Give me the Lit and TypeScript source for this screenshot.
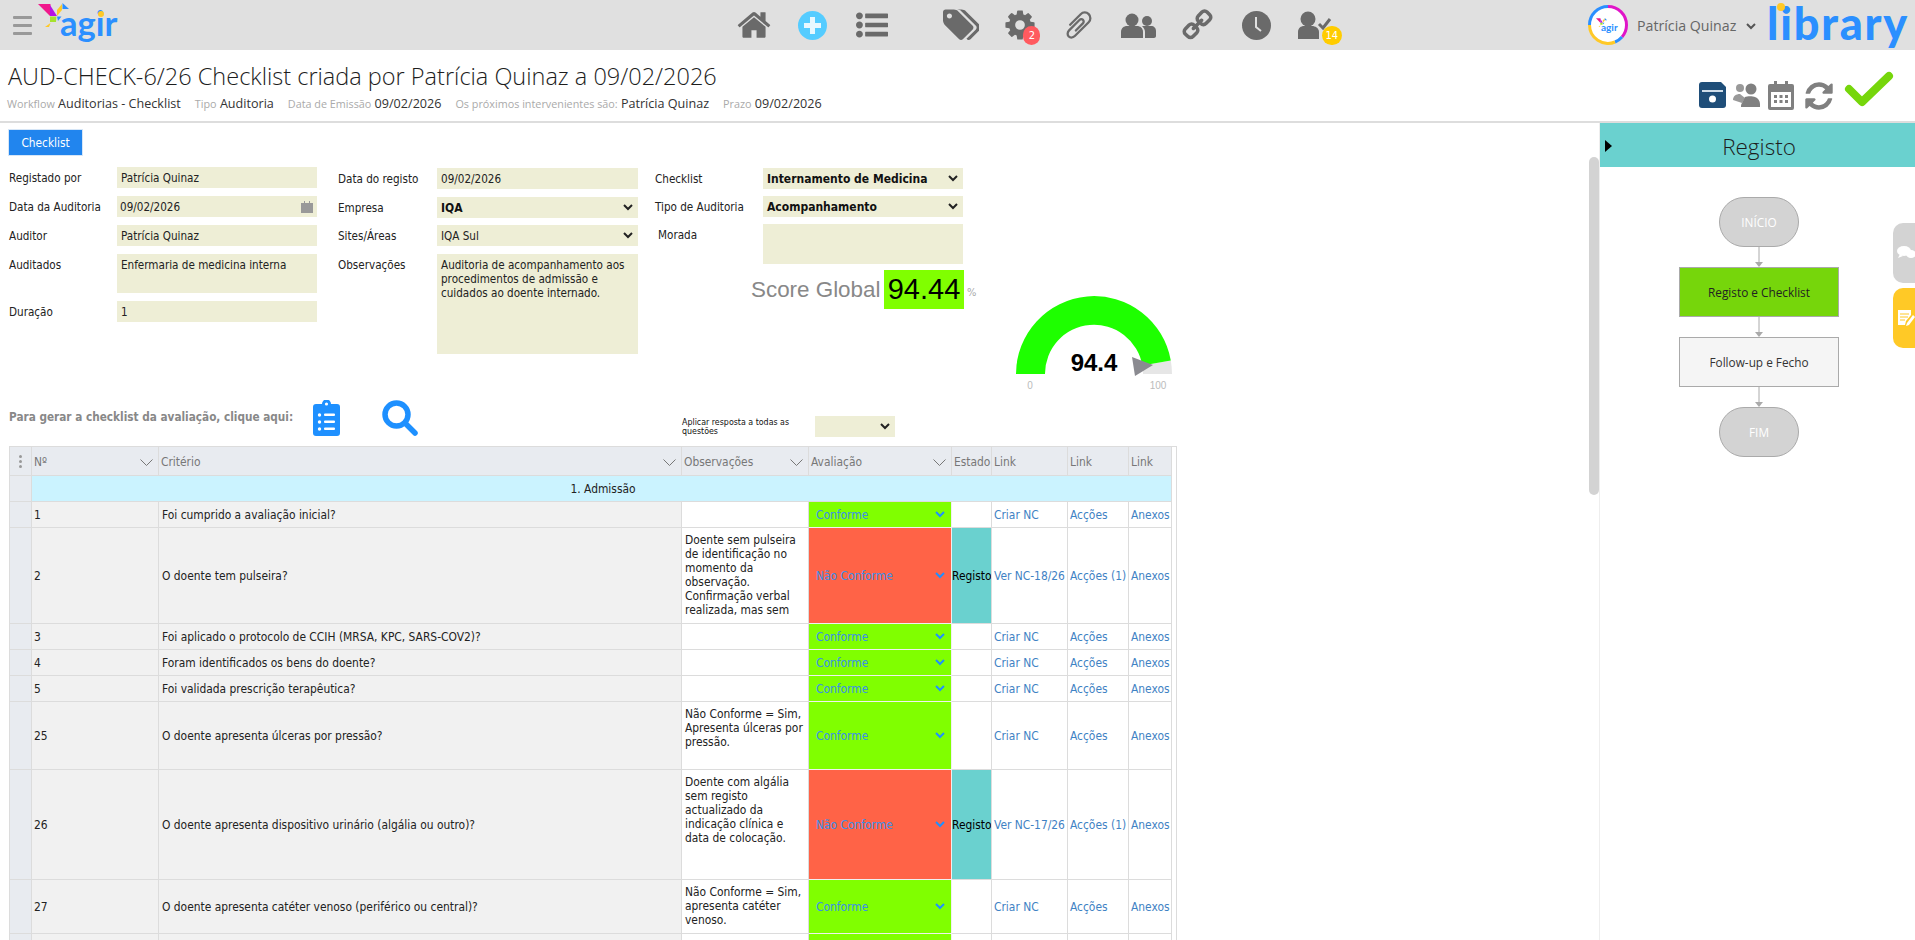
import { LitElement, html, css, svg } from "lit";
import { customElement } from "lit/decorators.js";

const fa = (d: string, w: number, h: number, cls = "") =>
  html`<svg class=${cls} width=${w} height=${h} viewBox="0 0 1792 1792"><path fill="currentColor" d=${d}></path></svg>`;

const P = {
  home: "M1472 992v480q0 26-19 45t-45 19h-384v-384h-256v384h-384q-26 0-45-19t-19-45v-480q0-1 .5-3t.5-3l575-474 575 474q1 2 1 6zm223-69l-62 74q-8 9-21 11h-3q-13 0-21-7l-692-577-692 577q-12 8-24 7-13-2-21-11l-62-74q-8-10-7-23.5t11-21.5l719-599q32-26 76-26t76 26l244 204v-195q0-14 9-23t23-9h192q14 0 23 9t9 23v408l219 182q10 8 11 21.5t-7 23.5z",
  list: "M384 1408q0 80-56 136t-136 56-136-56-56-136 56-136 136-56 136 56 56 136zm0-512q0 80-56 136t-136 56-136-56-56-136 56-136 136-56 136 56 56 136zm1408 416v192q0 13-9.5 22.5t-22.5 9.5h-1216q-13 0-22.5-9.5t-9.5-22.5v-192q0-13 9.5-22.5t22.5-9.5h1216q13 0 22.5 9.5t9.5 22.5zm-1408-928q0 80-56 136t-136 56-136-56-56-136 56-136 136-56 136 56 56 136zm1408 416v192q0 13-9.5 22.5t-22.5 9.5h-1216q-13 0-22.5-9.5t-9.5-22.5v-192q0-13 9.5-22.5t22.5-9.5h1216q13 0 22.5 9.5t9.5 22.5zm0-512v192q0 13-9.5 22.5t-22.5 9.5h-1216q-13 0-22.5-9.5t-9.5-22.5v-192q0-13 9.5-22.5t22.5-9.5h1216q13 0 22.5 9.5t9.5 22.5z",
  tags: "M448 448q0-53-37.5-90.5t-90.5-37.5-90.5 37.5-37.5 90.5 37.5 90.5 90.5 37.5 90.5-37.5 37.5-90.5zm1067 576q0 53-37 90l-491 492q-39 37-91 37-53 0-90-37l-715-716q-38-37-64.5-101t-26.5-117v-416q0-52 38-90t90-38h416q53 0 117 26.5t102 64.5l715 714q37 39 37 91zm384 0q0 53-37 90l-491 492q-39 37-91 37-36 0-59-14t-53-45l470-470q37-37 37-90 0-52-37-91l-715-714q-38-38-102-64.5t-117-26.5h224q53 0 117 26.5t102 64.5l715 714q37 39 37 91z",
  cog: "M1152 896q0-106-75-181t-181-75-181 75-75 181 75 181 181 75 181-75 75-181zm512-109v222q0 12-8 23t-20 13l-185 28q-19 54-39 91 35 50 107 138 10 12 10 25t-9 23q-27 37-99 108t-94 71q-12 0-26-9l-138-108q-44 23-91 38-16 136-29 186-7 28-36 28h-222q-14 0-24.5-8.5t-11.5-21.5l-28-184q-49-16-90-37l-141 107q-10 9-25 9-14 0-25-11-126-114-165-168-7-10-7-23 0-12 8-23 15-21 51-66.5t54-70.5q-27-50-41-99l-183-27q-13-2-21-12.5t-8-23.5v-222q0-12 8-23t19-13l186-28q14-46 39-92-40-57-107-138-10-12-10-24 0-10 9-23 26-36 98.5-107.5t94.5-71.5q13 0 26 10l138 107q44-23 91-38 16-136 29-186 7-28 36-28h222q14 0 24.5 8.5t11.5 21.5l28 184q49 16 90 37l142-107q9-9 24-9 13 0 25 10 129 119 165 170 7 8 7 22 0 12-8 23-15 21-51 66.5t-54 70.5q26 50 41 98l183 28q13 2 21 12.5t8 23.5z",
  clip: "M1596 1385q0 117-79 196t-196 79q-135 0-235-100l-777-776q-113-115-113-271 0-159 110-270t269-111q158 0 273 113l605 606q10 10 10 22 0 16-30.5 46.5t-46.5 30.5q-13 0-23-10l-606-607q-79-77-181-77-106 0-179 75t-73 181q0 105 76 181l776 777q63 63 145 63 64 0 106-42t42-106q0-82-63-145l-581-581q-26-24-60-24-29 0-48 19t-19 48q0 32 25 59l410 410q10 10 10 22 0 16-31 47t-47 31q-12 0-22-10l-410-410q-63-61-63-149 0-82 57-139t139-57q88 0 149 63l581 581q100 98 100 235z",
  link: "M1520 1216q0-40-28-68l-208-208q-28-28-68-28-42 0-72 32 3 3 19 18.5t21.5 21.5 15 19 13 25.5 3.5 27.5q0 40-28 68t-68 28q-15 0-27.5-3.5t-25.5-13-19-15-21.5-21.5-18.5-19q-33 31-33 73 0 40 28 68l206 207q27 27 68 27 40 0 68-26l147-146q28-28 28-67zm-703-705q0-40-28-68l-206-207q-28-28-68-28-39 0-68 27l-147 146q-28 28-28 67 0 40 28 68l208 208q27 27 68 27 42 0 72-31-3-3-19-18.5t-21.5-21.5-15-19-13-25.5-3.5-27.5q0-40 28-68t68-28q15 0 27.5 3.5t25.5 13 19 15 21.5 21.5 18.5 19q33-31 33-73zm895 705q0 120-85 203l-147 146q-83 83-203 83-121 0-204-85l-206-207q-83-83-83-203 0-123 88-209l-88-88q-86 88-208 88-120 0-204-84l-208-208q-84-84-84-204t85-203l147-146q83-83 203-83 121 0 204 85l206 207q83 83 83 203 0 123-88 209l88 88q86-88 208-88 120 0 204 84l208 208q84 84 84 204z",
  refresh: "M1639 1056q0 5-1 7-64 268-268 434.5t-478 166.5q-146 0-282.5-55t-243.5-157l-129 129q-19 19-45 19t-45-19-19-45v-448q0-26 19-45t45-19h448q26 0 45 19t19 45-19 45l-137 137q71 66 161 102t187 36q134 0 250-65t186-179q11-17 53-117 8-23 30-23h192q13 0 22.5 9.5t9.5 22.5zm25-800v448q0 26-19 45t-45 19h-448q-26 0-45-19t-19-45 19-45l138-138q-148-137-349-137-134 0-250 65t-186 179q-11 17-53 117-8 23-30 23h-199q-13 0-22.5-9.5t-9.5-22.5v-7q65-268 270-434.5t480-166.5q146 0 284 55.5t245 156.5l130-129q19-19 45-19t45 19 19 45z",
};

const chev = (cls = "chev") => html`<svg class=${cls} width="10" height="7" viewBox="0 0 10 7"><polyline points="1,1 5,5 9,1" fill="none" stroke="currentColor" stroke-width="2"></polyline></svg>`;
const thinChev = html`<svg class="hchev" width="13" height="7" viewBox="0 0 13 7"><polyline points="0.5,0.5 6.5,6.5 12.5,0.5" fill="none" stroke="currentColor" stroke-width="1"></polyline></svg>`;

const bird = svg`
  <polygon points="0,1 12.5,1 12,13" fill="#f0188c"></polygon>
  <polygon points="12,2 19,13 12,13" fill="#b512e6"></polygon>
  <polygon points="19,7 24,1 24,7 19,13" fill="#ffc926"></polygon>
  <polygon points="24.5,0 31,6 24.5,6" fill="#2b8fff"></polygon>
  <polygon points="12,13.5 18.5,13.5 18,19 12,19" fill="#a6e22e"></polygon>
  <polygon points="19,13.5 23.5,13.5 20,18" fill="#2b8fff"></polygon>
  <polygon points="7,24 12.5,20 11,24" fill="#ffc926"></polygon>`;

type Row = { n: string; q: string; h: number; obs?: string[]; bad?: boolean; nc?: string };
const rows: Row[] = [
  { n: "1", q: "Foi cumprido a avaliação inicial?", h: 26 },
  { n: "2", q: "O doente tem pulseira?", h: 96, bad: true, nc: "Ver NC-18/26",
    obs: ["Doente sem pulseira", "de identificação no", "momento da", "observação.", "Confirmação verbal", "realizada, mas sem"] },
  { n: "3", q: "Foi aplicado o protocolo de CCIH (MRSA, KPC, SARS-COV2)?", h: 26 },
  { n: "4", q: "Foram identificados os bens do doente?", h: 26 },
  { n: "5", q: "Foi validada prescrição terapêutica?", h: 26 },
  { n: "25", q: "O doente apresenta úlceras por pressão?", h: 68,
    obs: ["Não Conforme = Sim,", "Apresenta úlceras por", "pressão."] },
  { n: "26", q: "O doente apresenta dispositivo urinário (algália ou outro)?", h: 110, bad: true, nc: "Ver NC-17/26",
    obs: ["Doente com algália", "sem registo", "actualizado da", "indicação clínica e", "data de colocação."] },
  { n: "27", q: "O doente apresenta catéter venoso (periférico ou central)?", h: 54,
    obs: ["Não Conforme = Sim,", "apresenta catéter", "venoso."] },
];

@customElement("app-root")
export class AppRoot extends LitElement {
  static styles = css`
    :host { display: block; width: 1915px; height: 940px; overflow: hidden; background: #fff; position: relative;
      font-family: "DejaVu Sans", "Liberation Sans", sans-serif; font-stretch: condensed; font-size: 11.8px; color: #222; }
    * { box-sizing: border-box; }
    svg { display: block; flex: none; }
    .flip { transform: scaleX(-1); }

    .top { height: 50px; background: #e0e0e0; display: flex; align-items: flex-start; }
    .burger { width: 19px; flex: none; margin: 16px 0 0 13px; display: flex; flex-direction: column; gap: 5px; }
    .burger i { height: 3px; background: #999; border-radius: 1px; }
    .logo { position: relative; flex: none; width: 82px; height: 47px; margin: 3px 0 0 6px; }
    .logo svg { position: absolute; left: 0; top: 0; }
    .agir { position: absolute; left: 22px; top: 0; font: 700 34.5px/40px Lato, "Open Sans", sans-serif; color: #2b8fff; }
    .logo .dot { position: absolute; left: 60px; top: 8px; width: 6px; height: 6px; border-radius: 50%; background: #ffc926; }
    .nav { display: flex; flex: none; margin-left: 604px; height: 50px; color: #6a6a6a; }
    .nav .ic { position: relative; width: 59.1px; display: flex; align-items: center; justify-content: center; }
    .nav .ic.gap { margin-left: 30px; }
    .badge { position: absolute; top: 26px; height: 19px; border-radius: 10px; color: #fff; font-size: 11px; line-height: 19px; text-align: center; }
    .badge.red { left: 33px; width: 17px; background: #ff5a5f; }
    .badge.yel { left: 36px; width: 20px; background: #ffcc00; }
    .user { margin-left: auto; display: flex; align-items: center; height: 50px; flex: none; }
    .uname { margin-left: 9px; font: 400 14.2px "Open Sans", sans-serif; color: #666; width: 99px; white-space: nowrap; }
    .user .drop { margin: 2px 0 0 10px; color: #555; }
    .lib { position: relative; margin-left: 11px; width: 148px; height: 50px; font: 900 45px/46px Lato, "Open Sans", sans-serif; color: #2b8fff; letter-spacing: 1.8px; }
    .lib .dot { position: absolute; left: 10px; top: 3px; width: 8px; height: 8px; border-radius: 50%; background: #ffc926; }

    .titlebar { height: 73px; border-bottom: 2px solid #ddd; display: flex; justify-content: space-between; }
    .tt { padding: 9px 0 0 8px; }
    h1 { margin: 0; font: 300 23.5px/34px "Open Sans", sans-serif; color: #1d1d1d; white-space: nowrap; }
    .sub { display: flex; margin: 3px 0 0 -1px; font: 400 12.6px/16px "Open Sans", sans-serif; white-space: nowrap; color: #333; }
    .sub span { margin-right: 14px; }
    .sub b { font-weight: 400; font-size: 10.8px; color: #aaa; }
    .tools { display: flex; align-items: flex-start; padding: 21px 21px 0 0; color: #808080; }
    .tools svg { margin-top: 11px; }
    .tools .save { color: #1f4e79; margin-right: 7px; }
    .tools .grp { margin-right: 8px; margin-top: 12px; }
    .tools .cal { margin-right: 9px; margin-top: 10px; }
    .tools .ref { margin-right: 9px; }
    .tools .ref svg { margin-top: 9px; }
    .tools .ok { margin-top: 0; color: #76d60b; }

    .main { display: flex; height: 817px; }
    .content { width: 1589px; flex: none; overflow: hidden; }
    .scroll { width: 11px; flex: none; padding-top: 34px; border-right: 1px solid #eee; }
    .scroll i { display: block; height: 338px; width: 10px; background: #d3d3d3; border-radius: 5px; }

    .btn { display: block; margin: 6px 0 0 8px; width: 75px; height: 27px; background: #2185ee; color: #fff; text-align: center; line-height: 27px; border: 1px solid #d6e6f7; }
    .form { display: flex; margin: 11px 0 0 9px; font-size: 11.6px; }
    .c { display: grid; grid-auto-rows: min-content; align-items: center; }
    .c1 { grid-template-columns: 108px 200px; row-gap: 8px; width: 308px; }
    .c2 { grid-template-columns: 99px 201px; row-gap: 8px; margin-left: 21px; padding-top: 1px; width: 300px; }
    .c3 { margin-left: 17px; padding-top: 1px; width: 330px; }
    .c3 .g { display: grid; grid-template-columns: 108px 200px; row-gap: 7px; align-items: center; }
    .f { height: 21px; background: #eeeed6; padding: 0 4px; line-height: 22px; display: flex; align-items: center; justify-content: space-between; white-space: nowrap; color: #222; }
    .f.sel { padding-right: 5px; }
    .f.b { font-weight: 700; font-size: 12px; color: #111; }
    .f .chev { color: #222; }
    .f.ta { display: block; line-height: 14px; padding-top: 4px; white-space: normal; }
    .f.date { padding-left: 3px; }
    .up { margin-top: -1px; }
    .lbl-top { align-self: start; padding-top: 4px; }
    .score { display: flex; align-items: center; margin: 6px 0 0 96px; height: 39px; }
    .score .sl { font: 400 22.4px "Liberation Sans", sans-serif; color: #888; width: 133px; white-space: nowrap; }
    .score .sv { width: 80px; height: 39px; background: #80ff00; font: 400 29px/39px "Liberation Sans", sans-serif; color: #000; text-align: center; }
    .score .pc { margin-left: 3px; margin-top: 6px; color: #aaa; font-size: 11px; }
    .gauge { margin: 129px 0 0 31px; }
    .gauge text { font-family: "Liberation Sans", sans-serif; }

    .gen { display: flex; height: 37px; margin-top: 4px; padding-left: 9px; }
    .gen .t { width: 304px; align-self: center; font-weight: 700; font-size: 11.7px; color: #888; white-space: nowrap; margin-top: -3px; }
    .gen .i1 { color: #1e90ff; }
    .gen .i2 { margin-left: 42px; color: #1e90ff; }
    .gen .ap { margin-left: 264px; width: 133px; align-self: flex-end; font-size: 8.8px; line-height: 9px; color: #111; padding-bottom: 1px; }
    .gen .f { width: 80px; align-self: flex-end; justify-content: flex-end; }

    .grid { margin: 9px 0 0 9px; width: 1168px; border: 1px solid #dcdcdc; border-bottom: 0; padding-right: 5px; font-size: 11.9px; }
    table { border-collapse: separate; border-spacing: 0; table-layout: fixed; width: 1162px; }
    .w0 { width: 22px; } .w1 { width: 127px; } .w2 { width: 523px; } .w3 { width: 127px; } .w4 { width: 143px; }
    .w5 { width: 40px; } .w6 { width: 76px; } .w7 { width: 61px; } .w8 { width: 43px; }
    td, th { border-right: 1px solid #dcdcdc; border-bottom: 1px solid #dcdcdc; padding: 0 0 0 3px; font-weight: 400; text-align: left; white-space: nowrap; overflow: hidden; }
    th { background: #e8ebf0; color: #777; height: 29px; padding: 2px 0 0 2px; }
    th .hd { display: flex; align-items: center; justify-content: space-between; padding-right: 5px; }
    th .hchev { color: #777; }
    .grip { background: #e8ebf0; padding: 0; }
    .dots { display: flex; flex-direction: column; gap: 2px; align-items: center; }
    .dots i { width: 3px; height: 3px; border-radius: 50%; background: #999; }
    .sect td { height: 26px; background: #cbf3ff; text-align: center; color: #222; }
    .sect td.grip { background: #e8ebf0; }
    .num, .q { background: #f1f1f1; color: #222; }
    .num { padding-left: 2px; }
    td.obs { vertical-align: top; color: #222; padding-top: 5px; line-height: 14px; }
    td.ev { padding: 0 6px 0 7px; color: #3a8fe8; border-right-color: #f0f0f0; border-bottom-color: #f0f0f0; }
    td.ev.ok { background: #80ff00; }
    td.ev.bad { background: #ff6347; }
    td.ev div { display: flex; align-items: center; justify-content: space-between; }
    td.ev .chev { color: #1e90ff; }
    td.st { padding: 0; text-align: center; color: #000; }
    td.st.on { background: #6ad1cf; }
    td.lk { color: #3f82c4; padding-left: 2px; }

    .panel { position: relative; flex: 1; }
    .ph { height: 44px; background: #6ad1cf; position: relative; text-align: center; padding-left: 3px; font: 300 22.5px/48px "Open Sans", sans-serif; color: #1d1d1d; }
    .ph i { position: absolute; left: 5px; top: 17px; width: 0; height: 0; border-left: 7px solid #000; border-top: 6px solid transparent; border-bottom: 6px solid transparent; }
    .flow { display: flex; flex-direction: column; align-items: center; padding: 30px 0 0 3px; font: 400 11.8px "Open Sans", sans-serif; }
    .node { display: flex; align-items: center; justify-content: center; height: 50px; border: 1px solid #aaa; }
    .node.t { width: 80px; border-radius: 25px; background: #d3d3d3; color: #fff; }
    .node.p { width: 160px; }
    .node.cur { background: #76d60b; color: #222; }
    .node.nx { background: #f5f5f5; color: #333; }
    .conn { display: block; }
    .tab { position: absolute; right: 0; width: 22px; height: 60px; border-radius: 10px 0 0 10px; display: flex; align-items: center; padding-left: 4px; overflow: hidden; }
    .tab.g { top: 100px; background: #d3d3d3; }
    .tab.y { top: 165px; background: #ffc926; }
  `;

  private conn() {
    return html`<svg class="conn" width="10" height="20" viewBox="0 0 10 20"><line x1="5" y1="0" x2="5" y2="15" stroke="#aaa"></line><polygon points="1,15 9,15 5,20" fill="#aaa"></polygon></svg>`;
  }

  private row(r: Row) {
    return html`<tr style="height:${r.h}px">
      <td class="grip"></td>
      <td class="num">${r.n}</td>
      <td class="q">${r.q}</td>
      <td class="obs">${(r.obs ?? []).map((l) => html`${l}<br />`)}</td>
      <td class="ev ${r.bad ? "bad" : "ok"}"><div>${r.bad ? "Não Conforme" : "Conforme"}${chev()}</div></td>
      <td class="st ${r.bad ? "on" : ""}">${r.bad ? "Registo" : ""}</td>
      <td class="lk">${r.nc ?? "Criar NC"}</td>
      <td class="lk">${r.bad ? "Acções (1)" : "Acções"}</td>
      <td class="lk">Anexos</td>
    </tr>`;
  }

  render() {
    return html`
      <div class="top">
        <div class="burger"><i></i><i></i><i></i></div>
        <div class="logo">
          <svg width="34" height="26" viewBox="0 0 34 26">${bird}</svg>
          <span class="agir">agir</span><span class="dot"></span>
        </div>
        <nav class="nav">
          <span class="ic">${fa(P.home, 36, 36)}</span>
          <span class="ic"><svg width="29" height="29" viewBox="0 0 29 29"><circle cx="14.5" cy="14.5" r="14.5" fill="#55ccff"></circle><path d="M12 6h5v6h6v5h-6v6h-5v-6H6v-5h6z" fill="#e8f8ff"></path></svg></span>
          <span class="ic">${fa(P.list, 32, 32)}</span>
          <span class="ic gap">${fa(P.tags, 36, 36)}</span>
          <span class="ic">${fa(P.cog, 34, 34)}<span class="badge red">2</span></span>
          <span class="ic">${fa(P.clip, 32, 32, "flip")}</span>
          <span class="ic"><svg width="35" height="25" viewBox="0 0 35 25" fill="currentColor"><circle cx="11" cy="7" r="6.5"></circle><path d="M0 25v-6c0-4 3-6 6-6h10c3 0 6 2 6 6v6z"></path><circle cx="26" cy="8" r="5"></circle><path d="M24 25v-6c0-2-1-4-3-6h9c3 0 5 2 5 5v5c0 1-1 2-2 2z"></path></svg></span>
          <span class="ic">${fa(P.link, 33, 33, "flip")}</span>
          <span class="ic"><svg width="29" height="29" viewBox="0 0 29 29"><circle cx="14.5" cy="14.5" r="14.5" fill="currentColor"></circle><path d="M14 6v10l5 4" fill="none" stroke="#e0e0e0" stroke-width="2"></path></svg></span>
          <span class="ic"><svg width="34" height="28" viewBox="0 0 34 28" fill="currentColor"><circle cx="10" cy="8" r="7.5"></circle><path d="M0 28v-7c0-4 3-6 6-6h8c3 0 7 2 7 6v7z"></path><polyline points="21,13 25,17 32,8" fill="none" stroke="currentColor" stroke-width="3"></polyline></svg><span class="badge yel">14</span></span>
        </nav>
        <div class="user">
          <svg width="40" height="40" viewBox="0 0 40 40">
            <circle cx="20" cy="20" r="18.5" fill="#fff"></circle>
            <path d="M20 1.5A18.5 18.5 0 0 1 38.5 20 18.5 18.5 0 0 1 34 32" fill="none" stroke="#e015c8" stroke-width="3"></path>
            <path d="M1.5 20A18.5 18.5 0 0 1 20 1.5" fill="none" stroke="#2b8fff" stroke-width="3"></path>
            <path d="M34 32A18.5 18.5 0 0 1 27 37" fill="none" stroke="#2b8fff" stroke-width="3"></path>
            <path d="M27 37A18.5 18.5 0 0 1 1.5 20" fill="none" stroke="#ffc926" stroke-width="3"></path>
            <g transform="translate(8 13) scale(.36)">${bird}</g>
            <text x="13" y="26" font-family="Lato, sans-serif" font-weight="700" font-size="10" fill="#2b8fff">agir</text>
          </svg>
          <span class="uname">Patrícia Quinaz</span>
          <span class="drop">${chev("")}</span>
          <div class="lib">library<span class="dot"></span></div>
        </div>
      </div>

      <div class="titlebar">
        <div class="tt">
          <h1>AUD-CHECK-6/26 Checklist criada por Patrícia Quinaz a 09/02/2026</h1>
          <div class="sub">
            <span><b>Workflow</b> Auditorias - Checklist</span>
            <span><b>Tipo</b> Auditoria</span>
            <span><b>Data de Emissão</b> 09/02/2026</span>
            <span><b>Os próximos intervenientes são:</b> Patrícia Quinaz</span>
            <span><b>Prazo</b> 09/02/2026</span>
          </div>
        </div>
        <div class="tools">
          <svg class="save" width="27" height="26" viewBox="0 0 27 26"><path fill="currentColor" d="M3 0h19l5 5v18a3 3 0 0 1-3 3H3a3 3 0 0 1-3-3V3a3 3 0 0 1 3-3z"></path><rect x="3" y="8" width="21" height="2" fill="#cfdde9"></rect><circle cx="13.5" cy="17" r="3.5" fill="#fff"></circle></svg>
          <svg class="grp" width="27" height="24" viewBox="0 0 27 24" fill="currentColor"><circle cx="7" cy="5" r="4" opacity=".8"></circle><path d="M0 17c0-4 3-6 7-6l5 4-3 5z" opacity=".8"></path><circle cx="18" cy="6" r="5.5"></circle><path d="M8 24c0-1 0-3 1-4l3-6c2-1 8-1 10 0 3 1 5 4 5 7v3z"></path></svg>
          <svg class="cal" width="26" height="29" viewBox="0 0 26 29" fill="currentColor"><path d="M2 3h4V0h3v3h8V0h3v3h4a2 2 0 0 1 2 2v22a2 2 0 0 1-2 2H2a2 2 0 0 1-2-2V5a2 2 0 0 1 2-2zm1 8v15h20V11z"></path><path d="M6 14h3v3H6zM11.500 14h3v3h-3zM17 14h3v3h-3zM6 19h3v3H6zM11.500 19h3v3h-3zM17 19h3v3h-3z"></path></svg>
          <span class="ref">${fa(P.refresh, 32, 32)}</span>
          <svg class="ok" width="50" height="36" viewBox="0 0 50 36"><polyline points="5,18 18,31 45,5" fill="none" stroke="currentColor" stroke-width="8" stroke-linecap="round" stroke-linejoin="round"></polyline></svg>
        </div>
      </div>

      <div class="main">
        <div class="content">
          <div class="btn">Checklist</div>
          <div class="form">
            <div class="c c1">
              <span>Registado por</span><div class="f">Patrícia Quinaz</div>
              <span>Data da Auditoria</span>
              <div class="f date">09/02/2026<svg width="12" height="13" viewBox="0 0 12 13" fill="#999"><path d="M0 3h3V1h1v2h4V1h1v2h3v10H0z"></path></svg></div>
              <span>Auditor</span><div class="f">Patrícia Quinaz</div>
              <span class="lbl-top">Auditados</span><div class="f ta" style="height:39px">Enfermaria de medicina interna</div>
              <span>Duração</span><div class="f">1</div>
            </div>
            <div class="c c2">
              <span>Data do registo</span><div class="f">09/02/2026</div>
              <span>Empresa</span><div class="f sel b">IQA${chev()}</div>
              <span>Sites/Áreas</span><div class="f sel up">IQA Sul${chev()}</div>
              <span class="lbl-top">Observações</span>
              <div class="f ta" style="height:100px">Auditoria de acompanhamento aos procedimentos de admissão e cuidados ao doente internado.</div>
            </div>
            <div class="c3">
              <div class="g">
                <span>Checklist</span><div class="f sel b">Internamento de Medicina${chev()}</div>
                <span>Tipo de Auditoria</span><div class="f sel b">Acompanhamento${chev()}</div>
                <span class="lbl-top" style="padding-left:3px">Morada</span><div class="f ta" style="height:40px"></div>
              </div>
              <div class="score"><span class="sl">Score Global</span><span class="sv">94.44</span><span class="pc">%</span></div>
            </div>
            <svg class="gauge" width="160" height="100" viewBox="0 0 160 100">
              <path d="M154.800 64.500A78 78 0 0 1 156 78H127A49 49 0 0 0 126.300 69.500Z" fill="#e6e6e6"></path>
              <path d="M0 78A78 78 0 0 1 154.800 64.500L126.300 69.500A49 49 0 0 0 29 78Z" fill="#1eff00"></path>
              <polygon points="116,61 119,80 137,69" fill="#8a8a90"></polygon>
              <text x="78" y="75" text-anchor="middle" font-size="24" font-weight="700" fill="#000">94.4</text>
              <text x="14" y="93" text-anchor="middle" font-size="10" fill="#bbb">0</text>
              <text x="142" y="93" text-anchor="middle" font-size="10" fill="#bbb">100</text>
            </svg>
          </div>
          <div class="gen">
            <span class="t">Para gerar a checklist da avaliação, clique aqui:</span>
            <svg class="i1" width="27" height="36" viewBox="0 0 27 36"><path fill="currentColor" d="M3 4h6a4.500 4.500 0 0 1 9 0h6a3 3 0 0 1 3 3v26a3 3 0 0 1-3 3H3a3 3 0 0 1-3-3V7a3 3 0 0 1 3-3z"></path><circle cx="13.500" cy="4" r="1.600" fill="#fff"></circle><g fill="#fff"><circle cx="6.500" cy="15" r="1.700"></circle><circle cx="6.500" cy="22" r="1.700"></circle><circle cx="6.500" cy="29" r="1.700"></circle><rect x="11" y="13.500" width="11" height="2.600" rx="1"></rect><rect x="11" y="20.500" width="11" height="2.600" rx="1"></rect><rect x="11" y="27.500" width="11" height="2.600" rx="1"></rect></g></svg>
            <svg class="i2" width="36" height="36" viewBox="0 0 36 36"><circle cx="14.500" cy="14.500" r="11.500" fill="none" stroke="currentColor" stroke-width="5.500"></circle><line x1="23" y1="23" x2="33" y2="33" stroke="currentColor" stroke-width="5.500" stroke-linecap="round"></line></svg>
            <span class="ap">Aplicar resposta a todas as questões</span>
            <div class="f sel">${chev()}</div>
          </div>
          <div class="grid">
            <table>
              <colgroup><col class="w0" /><col class="w1" /><col class="w2" /><col class="w3" /><col class="w4" /><col class="w5" /><col class="w6" /><col class="w7" /><col class="w8" /></colgroup>
              <tr>
                <th class="grip"><div class="dots"><i></i><i></i><i></i></div></th>
                <th><div class="hd">Nº${thinChev}</div></th>
                <th><div class="hd">Critério${thinChev}</div></th>
                <th><div class="hd">Observações${thinChev}</div></th>
                <th><div class="hd">Avaliação${thinChev}</div></th>
                <th>Estado</th><th>Link</th><th>Link</th><th>Link</th>
              </tr>
              <tr class="sect"><td class="grip"></td><td colspan="8">1. Admissão</td></tr>
              ${rows.map((r) => this.row(r))}
              <tr style="height:54px"><td class="grip"></td><td class="num"></td><td class="q"></td><td class="obs"></td><td class="ev ok"></td><td class="st"></td><td></td><td></td><td></td></tr>
            </table>
          </div>
        </div>
        <div class="scroll"><i></i></div>
        <aside class="panel">
          <div class="ph"><i></i>Registo</div>
          <div class="flow">
            <div class="node t">INÍCIO</div>${this.conn()}
            <div class="node p cur">Registo e Checklist</div>${this.conn()}
            <div class="node p nx">Follow-up e Fecho</div>${this.conn()}
            <div class="node t">FIM</div>
          </div>
          <div class="tab g"><svg width="18" height="14" viewBox="0 0 18 14" fill="#fff"><ellipse cx="7" cy="5" rx="7" ry="5"></ellipse><path d="M3 8l-2 4 5-2z"></path><ellipse cx="14" cy="8" rx="5" ry="4"></ellipse></svg></div>
          <div class="tab y"><svg width="18" height="18" viewBox="0 0 18 18"><path d="M1 1h13v5l-5 6-1 4H1z" fill="#fff"></path><path d="M3 5h9M3 8h8M3 11h5" stroke="#ffc926"></path><path d="M16 6l2 2-6 8-3 1 1-3z" fill="#fff"></path></svg></div>
        </aside>
      </div>
    `;
  }
}
